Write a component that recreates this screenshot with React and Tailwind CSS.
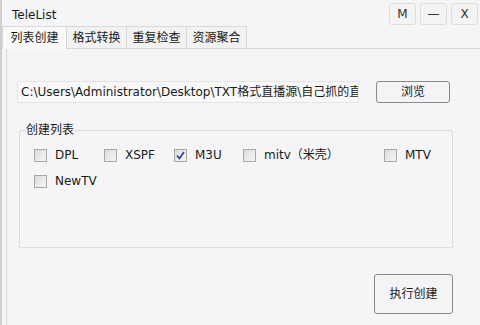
import React, { useState } from "react";

const font = { fontFamily: '"DejaVu Sans", "Noto Sans CJK SC", sans-serif' };

const Check = ({ checked, label, className }) => (
  <label className={"flex items-center gap-[8px] text-[12px] leading-[13px] text-[#1a1a1a] " + (className || "")}>
    <span className="w-[13px] h-[13px] border border-[#a8a8a8] bg-[linear-gradient(135deg,#dcdcdc,#f6f6f6)] flex items-center justify-center">
      {checked && (
        <svg width="9" height="9" viewBox="0 0 9 9">
          <path d="M1 4.5 L3.5 7.5 L8 1" fill="none" stroke="#2b3b8c" strokeWidth="1.6" />
        </svg>
      )}
    </span>
    <span>{label}</span>
  </label>
);

export default function App() {
  const [tab, setTab] = useState(0);
  const tabs = ["列表创建", "格式转换", "重复检查", "资源聚合"];

  return (
    <div className="w-[480px] h-[325px] bg-[#f5f5f7] border-l-2 border-[#cfcfcf] flex flex-col overflow-hidden" style={font}>
      {/* title bar */}
      <div className="h-[26px] flex items-center justify-between pr-[2px]">
        <span className="pl-[10px] pt-[3px] text-[12px] text-[#1a1a1a]">TeleList</span>
        <div className="flex gap-[4px] pt-[2px]">
          {["M", "—", "X"].map((b) => (
            <button key={b} className="w-[27px] h-[22px] rounded-[3px] border border-[#dedede] bg-[#f4f4f4] text-[12px] text-[#333] flex items-center justify-center">
              {b}
            </button>
          ))}
        </div>
      </div>

      {/* tabs */}
      <div className="flex items-end pl-[1px] h-[22px]">
        {tabs.map((t, i) => (
          <button
            key={t}
            onClick={() => setTab(i)}
            className={
              "h-[22px] w-[61px] text-[12px] text-[#1a1a1a] border border-b-0 border-[#d8d8d8] -ml-px " +
              (tab === i ? "bg-[#fafafa] h-[23px] w-[65px] -mb-px z-10" : "bg-[#f2f2f2]")
            }
          >
            {t}
          </button>
        ))}
      </div>

      {/* panel */}
      <div className="flex-1 border-t border-l border-[#d8d8d8] ml-[4px] flex flex-col pl-[10px] pr-[26px]">
        <div className="flex items-center mt-[32px] h-[22px]">
          <div className="w-[342px] h-[22px] bg-[#f8f8f8] border border-[#e4e4e4] text-[12px] text-[#1a1a1a] pl-[3px] leading-[20px] whitespace-nowrap overflow-hidden text-clip">
            C:\Users\Administrator\Desktop\TXT格式直播源\自己抓的直
          </div>
          <button className="ml-[17px] w-[74px] h-[22px] rounded-[3px] border border-[#8a8a8a] bg-[#f4f4f6] text-[12px] text-[#1a1a1a]">
            浏览
          </button>
        </div>

        <div className="relative mt-[27px] ml-[2px] w-[434px] h-[118px] border border-[#dcdcdc] rounded-[2px]">
          <span className="absolute -top-[10px] left-[5px] px-[1px] bg-[#f5f5f7] text-[12px] text-[#1a1a1a]">创建列表</span>
          <div className="grid grid-cols-[70px_70px_69px_141px_auto] pl-[14px] pt-[18px] gap-y-[13px]">
            <Check label="DPL" className="gap-[8px]" />
            <Check label="XSPF" />
            <Check checked label="M3U" />
            <Check label="mitv（米壳）" className="gap-[4px]" />
            <Check label="MTV" className="gap-[4px]" />
            <Check label="NewTV" className="gap-[3px]" />
          </div>
        </div>

        <div className="flex justify-end mt-[26px]">
          <button className="w-[79px] h-[40px] rounded-[3px] border border-[#8a8a8a] bg-[#f4f4f6] text-[12px] text-[#1a1a1a] mr-[1px]">
            执行创建
          </button>
        </div>
      </div>
    </div>
  );
}
